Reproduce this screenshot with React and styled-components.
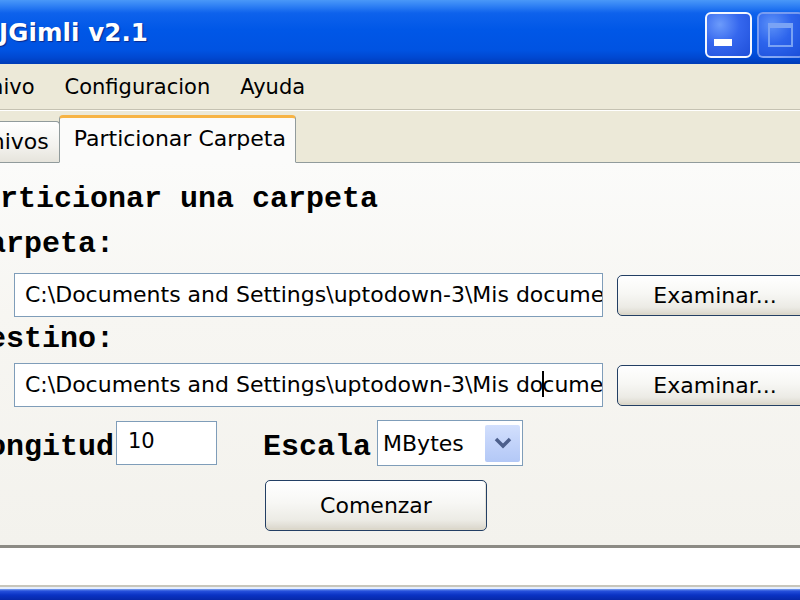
import styled, { createGlobalStyle } from 'styled-components';

const GlobalStyle = createGlobalStyle`
  html, body {
    margin: 0;
    padding: 0;
  }
  body {
    width: 800px;
    height: 600px;
    overflow: hidden;
    background: #0831d9;
    font-family: "DejaVu Sans", sans-serif;
  }
`;

const Screen = styled.div`
  width: 800px;
  height: 600px;
  overflow: hidden;
`;

const Window = styled.div`
  display: flex;
  flex-direction: column;
  width: 926px;
  height: 600px;
  margin-left: -60px;
  background: #ece9d8;
`;

const TitleBar = styled.header`
  flex: none;
  height: 64px;
  display: flex;
  align-items: center;
  padding: 0 10px 0 59px;
  box-sizing: border-box;
  background: linear-gradient(
    180deg,
    #4a98f8 0px,
    #2f80f4 6px,
    #0e62ec 13px,
    #0057e7 30px,
    #0053e2 50px,
    #0047d0 58px,
    #003cb6 64px
  );
`;

const Title = styled.h1`
  margin: 0;
  font: 700 24.5px "DejaVu Sans", sans-serif;
  color: #ffffff;
  letter-spacing: 0.1px;
  text-shadow: 1px 1px 1px #0b2a8c;
`;

const Controls = styled.div`
  margin-left: auto;
  margin-top: 6px;
  display: flex;
  gap: 5px;
`;

const CaptionButton = styled.div`
  width: 47px;
  height: 46px;
  box-sizing: border-box;
  border: 2px solid ${(p) => (p.$disabled ? 'rgba(220, 232, 255, 0.55)' : '#f4f7ff')};
  border-radius: 6px;
  background: ${(p) =>
    p.$close
      ? 'radial-gradient(circle at 30% 30%, #f0977c 0%, #d8552f 55%, #c23b18 100%)'
      : 'radial-gradient(circle at 30% 25%, #6c9bfb 0%, #3567ee 45%, #1f4fd9 100%)'};
  opacity: ${(p) => (p.$disabled ? 0.85 : 1)};
  display: flex;
  align-items: center;
  justify-content: center;
`;

const MenuBar = styled.nav`
  flex: none;
  height: 46px;
  box-sizing: border-box;
  display: flex;
  align-items: center;
  padding-left: 1px;
  border-bottom: 1px solid #c5c2b2;
`;

const MenuItem = styled.span`
  padding: 0 15px;
  font: 21px "DejaVu Sans", sans-serif;
  color: #000000;
`;

const TabStrip = styled.div`
  flex: none;
  height: 52px;
  display: flex;
  align-items: flex-end;
  padding-left: 4px;
  border-top: 1px solid #ffffff;
  box-sizing: border-box;
`;

const Tab = styled.div`
  box-sizing: border-box;
  height: ${(p) => (p.$active ? 48 : 41)}px;
  padding: ${(p) => (p.$active ? '8px 9px 0 14px' : '7px 10px 0 10px')};
  margin-left: ${(p) => (p.$active ? -1 : 0)}px;
  margin-bottom: ${(p) => (p.$active ? -1 : 0)}px;
  border: 1px solid #919b9c;
  border-bottom: ${(p) => (p.$active ? '1px solid #fbfbfa' : 'none')};
  border-top: ${(p) => (p.$active ? '3px solid #f7b445' : '1px solid #919b9c')};
  border-radius: 4px 4px 0 0;
  background: ${(p) =>
    p.$active ? '#fbfbfa' : 'linear-gradient(180deg, #ffffff 0%, #f3f2ee 60%, #e6e4dc 100%)'};
  font: 22px/26px "DejaVu Sans", sans-serif;
  color: #000000;
  white-space: nowrap;
  position: relative;
  z-index: ${(p) => (p.$active ? 1 : 0)};
`;

const Panel = styled.section`
  flex: 1;
  min-height: 0;
  box-sizing: border-box;
  padding: 21px 0 0 24px;
  border-top: 1px solid #919b9c;
  border-bottom: 3px solid #8c8b85;
  background: linear-gradient(180deg, #fbfbfa 0%, #f7f6f2 40%, #f3f2ed 100%);
`;

const monoBold = `700 30px/30px "Courier New", "Liberation Mono", monospace`;

const Heading = styled.h2`
  margin: 0;
  font: ${monoBold};
  color: #000000;
  white-space: nowrap;
`;

const Label = styled.div`
  margin: ${(p) => p.$top || 0}px 0 0 6px;
  font: ${monoBold};
  color: #000000;
  white-space: nowrap;
`;

const FieldRow = styled.div`
  display: flex;
  align-items: center;
  gap: 14px;
  margin: ${(p) => p.$top}px 0 0 50px;
`;

const PathField = styled.div`
  flex: none;
  width: 589px;
  height: 44px;
  box-sizing: border-box;
  padding: 0 10px;
  border: 1px solid #7f9db9;
  background: #ffffff;
  overflow: hidden;
  white-space: nowrap;
  font: 22px/42px "DejaVu Sans", sans-serif;
  color: #000000;
`;

const Caret = styled.span`
  display: inline-block;
  width: 2px;
  height: 26px;
  margin: 0 -2px 0 -1px;
  vertical-align: -5px;
  background: #000000;
`;

const XPButton = styled.button`
  flex: none;
  box-sizing: border-box;
  width: ${(p) => p.$w}px;
  height: ${(p) => p.$h}px;
  padding: 0;
  border: 1px solid #233f64;
  border-radius: 5px;
  background: linear-gradient(180deg, #ffffff 0%, #f7f7f4 45%, #ecebe5 80%, #d9d5ca 100%);
  box-shadow: inset 0 -2px 0 #dcd8cb, inset -1px 0 0 #e6e3d9;
  font: 22px "DejaVu Sans", sans-serif;
  color: #000000;
`;

const OptionsGrid = styled.div`
  display: grid;
  grid-template-columns: 144px 101px auto;
  justify-content: start;
  column-gap: 2px;
  row-gap: 14px;
  align-items: center;
  margin: 13px 0 0 6px;
`;

const InlineLabel = styled.div`
  margin-top: 8px;
  font: ${monoBold};
  color: #000000;
  white-space: nowrap;
`;

const NumberBox = styled.div`
  box-sizing: border-box;
  width: 101px;
  height: 44px;
  padding: 0 11px;
  border: 1px solid #7f9db9;
  background: #ffffff;
  font: 21px/38px "DejaVu Sans", sans-serif;
  color: #000000;
`;

const ScaleGroup = styled.div`
  display: flex;
  align-items: center;
  gap: 6px;
  margin-left: 44px;
`;

const Select = styled.div`
  box-sizing: border-box;
  width: 146px;
  height: 46px;
  display: flex;
  align-items: center;
  padding: 0 2px 0 5px;
  border: 1px solid #7f9db9;
  background: #ffffff;
  font: 22px "DejaVu Sans", sans-serif;
  color: #000000;
`;

const SelectArrow = styled.div`
  margin-left: auto;
  width: 35px;
  height: 37px;
  border-radius: 2px;
  background: linear-gradient(180deg, #d3e0fd 0%, #c2d3fa 50%, #b3c8f6 100%);
  display: flex;
  align-items: center;
  justify-content: center;
`;

const StartButtonCell = styled.div`
  grid-column: 3;
  margin-left: 46px;
`;

const StatusArea = styled.div`
  flex: none;
  height: 37px;
  background: #ffffff;
`;

const BottomFrame = styled.div`
  flex: none;
  height: 15px;
  background: linear-gradient(
    180deg,
    #c8c6bb 0px,
    #c8c6bb 2px,
    #e6eefc 2px,
    #e6eefc 4px,
    #7ea2ee 4px,
    #2550dc 6px,
    #0a33c4 10px,
    #0628a8 15px
  );
`;

const MinimizeGlyph = () => (
  <svg width="43" height="42" viewBox="0 0 43 42">
    <rect x="7" y="25" width="18" height="7" fill="#ffffff" />
  </svg>
);

const MaximizeGlyph = () => (
  <svg width="43" height="42" viewBox="0 0 43 42">
    <rect x="10" y="10" width="23" height="22" fill="none" stroke="#8fb0f7" strokeWidth="2" />
    <rect x="10" y="10" width="23" height="4" fill="#8fb0f7" />
  </svg>
);

const CloseGlyph = () => (
  <svg width="43" height="42" viewBox="0 0 43 42">
    <path d="M12 11 L31 31 M31 11 L12 31" stroke="#ffffff" strokeWidth="4" />
  </svg>
);

const Chevron = () => (
  <svg width="20" height="12" viewBox="0 0 20 12">
    <polyline points="3,2 10,9 17,2" fill="none" stroke="#4c5f8c" strokeWidth="3.5" />
  </svg>
);

const PATH = 'C:\\Documents and Settings\\uptodown-3\\Mis documentos';

const App = () => {
  return (
    <Screen>
      <GlobalStyle />
      <Window>
        <TitleBar>
          <Title>JGimli v2.1</Title>
          <Controls>
            <CaptionButton>
              <MinimizeGlyph />
            </CaptionButton>
            <CaptionButton $disabled>
              <MaximizeGlyph />
            </CaptionButton>
            <CaptionButton $close>
              <CloseGlyph />
            </CaptionButton>
          </Controls>
        </TitleBar>

        <MenuBar>
          <MenuItem>Archivo</MenuItem>
          <MenuItem>Configuracion</MenuItem>
          <MenuItem>Ayuda</MenuItem>
        </MenuBar>

        <TabStrip>
          <Tab>Archivos</Tab>
          <Tab $active>Particionar Carpeta</Tab>
        </TabStrip>

        <Panel>
          <Heading>Particionar una carpeta</Heading>

          <Label $top={15}>Carpeta:</Label>
          <FieldRow $top={14}>
            <PathField>{PATH}</PathField>
            <XPButton $w={196} $h={41}>Examinar...</XPButton>
          </FieldRow>

          <Label $top={7}>Destino:</Label>
          <FieldRow $top={9}>
            <PathField>
              C:\Documents and Settings\uptodown-3\Mis do
              <Caret />
              cumentos
            </PathField>
            <XPButton $w={196} $h={41}>Examinar...</XPButton>
          </FieldRow>

          <OptionsGrid>
            <InlineLabel>Longitud</InlineLabel>
            <NumberBox>10</NumberBox>
            <ScaleGroup>
              <InlineLabel>Escala</InlineLabel>
              <Select>
                MBytes
                <SelectArrow>
                  <Chevron />
                </SelectArrow>
              </Select>
            </ScaleGroup>
            <StartButtonCell>
              <XPButton $w={222} $h={51}>Comenzar</XPButton>
            </StartButtonCell>
          </OptionsGrid>
        </Panel>

        <StatusArea />
        <BottomFrame />
      </Window>
    </Screen>
  );
};

export default App;
